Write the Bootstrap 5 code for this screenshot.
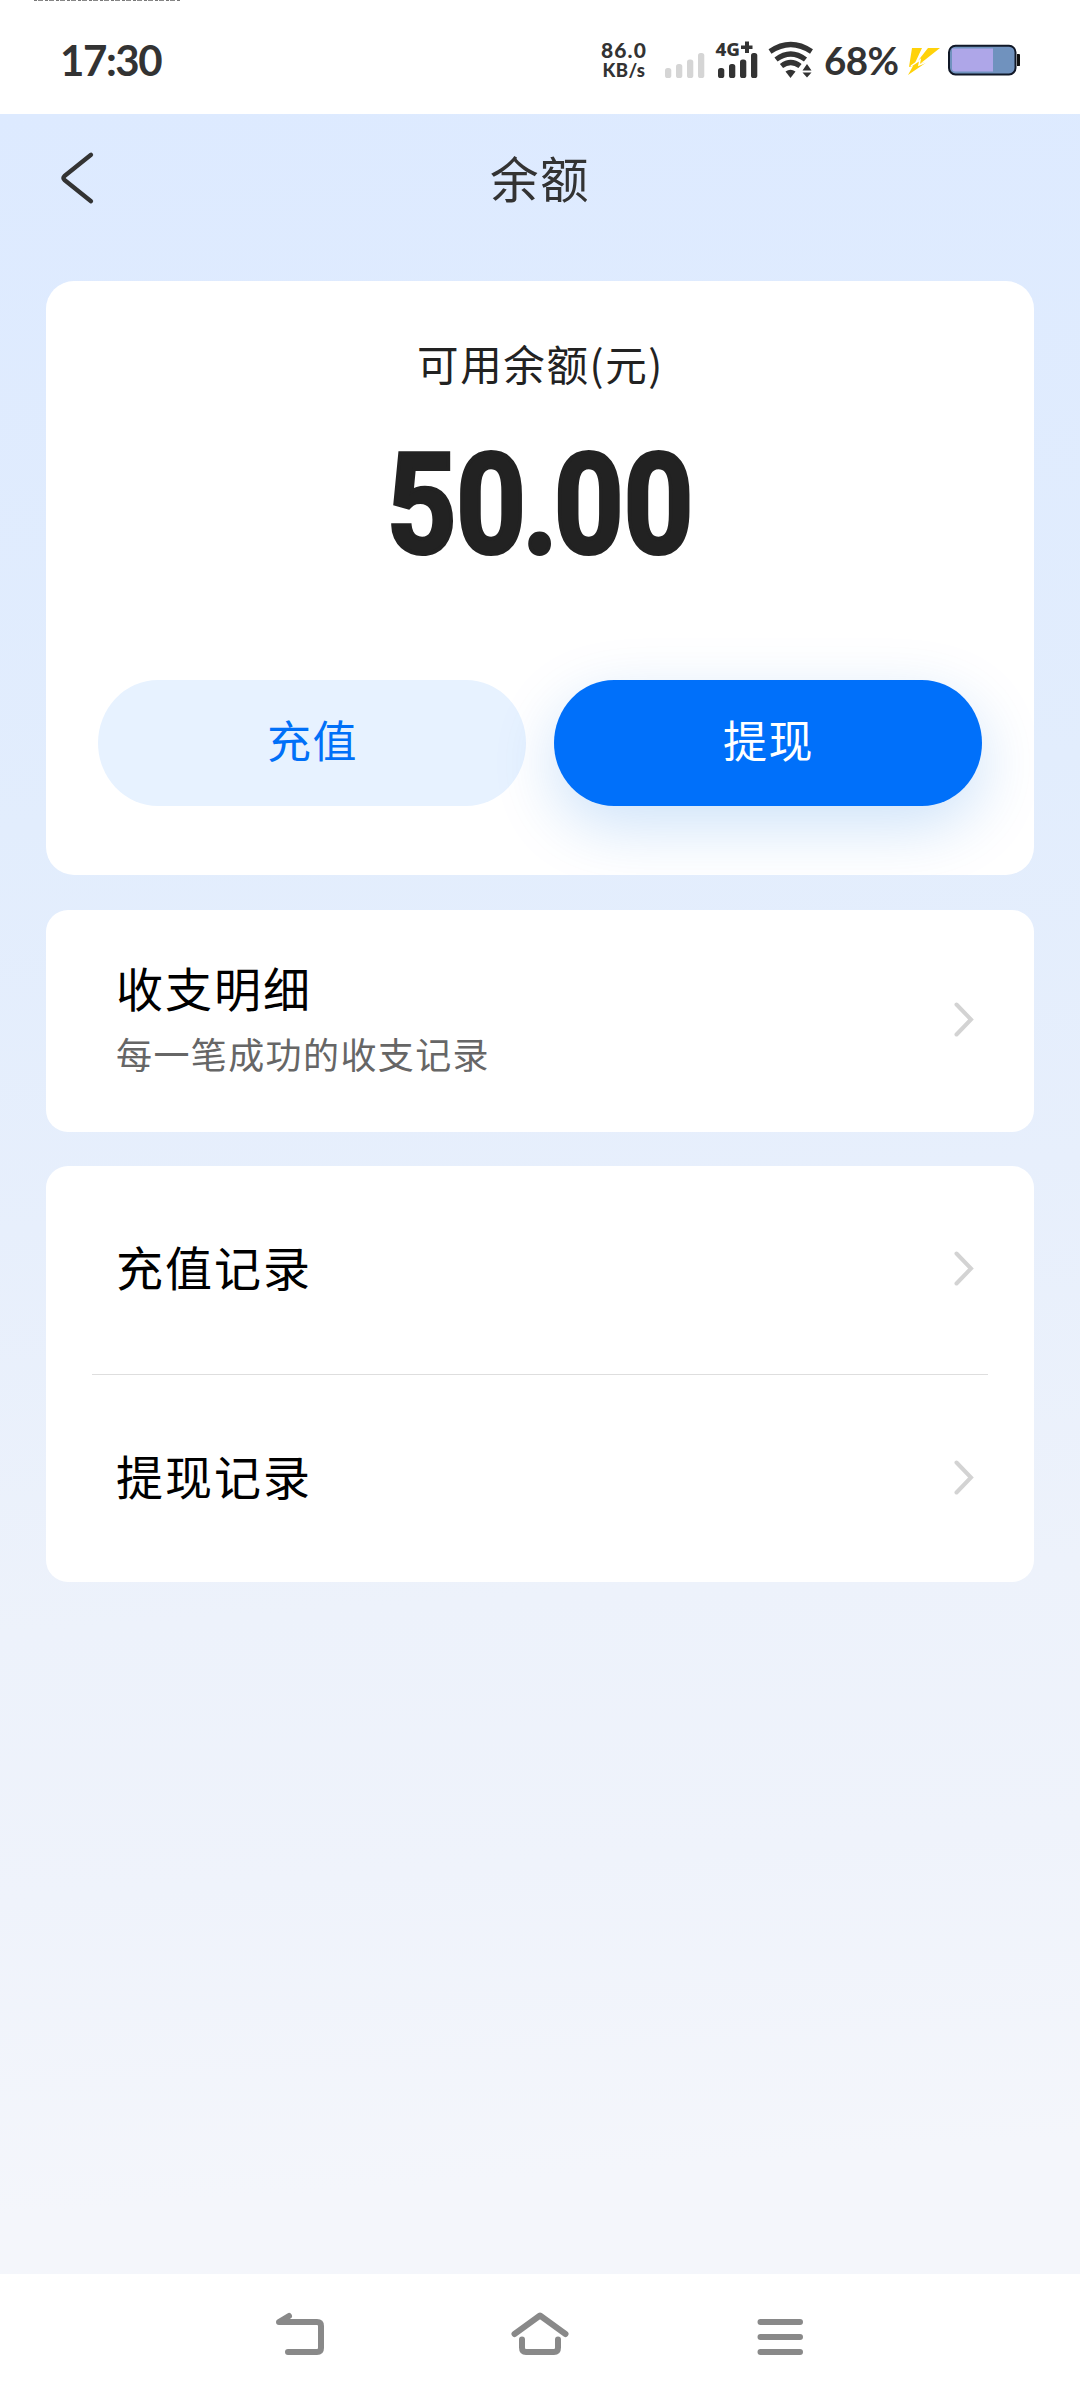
<!DOCTYPE html>
<html lang="zh-CN">
<head>
<meta charset="utf-8">
<meta name="viewport" content="width=device-width, initial-scale=1">
<title>余额</title>
<link href="https://cdn.jsdelivr.net/npm/bootstrap@5.3.0/dist/css/bootstrap.min.css" rel="stylesheet">
<style>
  body { font-family: "Noto Sans CJK SC", sans-serif; width: 1080px; height: 2400px; overflow: hidden; background: #fff; }
  svg { display: block; flex: none; }
  .status { height: 114px; font-family: Lato, sans-serif; color: #333; padding-left: 60px; padding-right: 60px; }
  .ticks { left: 34px; top: 0; width: 146px; height: 1px; background: repeating-linear-gradient(90deg, #777 0 3px, #fff 3px 4px, #888 4px 9px, #fff 9px 11px); }
  .clock { font-size: 42px; font-weight: 700; line-height: 60px; letter-spacing: -1.400px; padding-top: 30px; }
  .status-right { padding-top: 30px; height: 60px; }
  .rate { font: 900 21px/20px Lato, sans-serif; width: 50px; margin-right: 15px; padding-top: 10px; letter-spacing: 1.100px; }
  .rate small { display: block; font-size: 18.500px; line-height: 20px; letter-spacing: .4px; }
  .percent { font-size: 38.500px; font-weight: 700; line-height: 60px; width: 78px; letter-spacing: -.6px; }
  .page-bg { height: 2160px; background: linear-gradient(176deg, #ddeaff 0%, #e2edfd 32%, #e7effc 50%, #edf2fb 68%, #eff3fb 80%, #f4f6fb 94%, #f4f6fb 100%); padding: 0 46px; }
  .topbar { height: 167px; display: grid; grid-template-columns: 60px 1fr 60px; padding-top: 36px; }
  .topbar svg { margin-top: -2px; }
  .topbar h1 { font-size: 48.500px; line-height: 54px; letter-spacing: 1.600px; color: #333; font-weight: 400; }
  .panel { border: 0; border-radius: 22px; background: #fff; }
  .balance { height: 594px; border-radius: 28px; padding: 54px 52px 0; overflow: hidden; margin-bottom: 35px; }
  .caption-line { font-size: 41.500px; line-height: 56px; letter-spacing: 1.600px; color: #222; padding-left: 1px; }
  .amount { font: 700 140px/170px Roboto, sans-serif; color: #222; height: 170px; margin-top: 29px; white-space: nowrap; -webkit-text-stroke: 4px #222; }
  .amount span { display: inline-block; transform: scaleX(.866); }
  .amount i { font-style: normal; margin: 0 -4px; }
  .actions { margin-top: 90px; gap: 28px; }
  .actions .btn { height: 126px; border: 0; border-radius: 60px / 63px; font-size: 44px; line-height: 60px; letter-spacing: 1.400px; padding: 0 0 9px 1px; flex: 1 1 0; }
  .btn-soft { background: #e7f2ff; color: #0070f8; }
  .btn-solid { background: #0070fa; color: #fff; box-shadow: 0 20px 64px rgba(0, 112, 225, .2); }
  .detail { height: 222px; padding: 46px 60px 0 70px; margin-bottom: 34px; }
  .detail svg { margin-top: 46px; }
  .item-title { font-size: 47px; line-height: 62px; letter-spacing: 2px; color: #000; }
  .item-sub { font-size: 36px; line-height: 50px; letter-spacing: 1.400px; color: #666; margin-top: 10px; }
  .records { height: 416px; padding: 0 46px; }
  .record { height: 208px; padding: 0 14px 8px 24px; background: none; border: 0; }
  .record + .record { border-top: 1px solid #dedede; }
  .record svg { margin-top: 5px; }
  .record + .record svg { margin-top: 7px; }
  .sysnav { height: 126px; }
</style>
</head>
<body>
<header class="status d-flex justify-content-between align-items-start position-relative">
  <div class="ticks position-absolute"></div>
  <div class="clock">17:30</div>
  <div class="status-right d-flex">
    <div class="rate text-center">86.0<small>KB/s</small></div>
    <svg width="156" height="60" viewBox="664 30 156 60">
      <g fill="#d5d5d5"><rect x="665" y="68" width="6.300" height="10" rx="2.600"/><rect x="676" y="64" width="6.300" height="14" rx="2.600"/><rect x="687" y="59.500" width="6.300" height="18.500" rx="2.600"/><rect x="698" y="53" width="6.300" height="25" rx="2.600"/></g>
      <g fill="#333"><rect x="718" y="68" width="6.300" height="10" rx="2.600"/><rect x="729" y="64" width="6.300" height="14" rx="2.600"/><rect x="740" y="59.500" width="6.300" height="18.500" rx="2.600"/><rect x="751" y="53" width="6.300" height="25" rx="2.600"/>
        <text x="715.500" y="55.800" font-family="Noto Sans" font-size="18" font-weight="800" textLength="24.500" lengthAdjust="spacingAndGlyphs">4G</text>
        <path d="M741 45.500h4v-4h4v4h3.500v3.600h-3.500v4h-4v-4h-4z"/>
        <path d="M785.500 71.500q5-3.500 10 0l-5 6.500z"/><path d="M802.500 70.500l4.500-6.500 4.500 6.500zM802.500 72.500h9l-4.500 5z"/></g>
      <g fill="none" stroke="#333" stroke-width="5.200" stroke-linecap="butt"><path d="M770 51.500Q790.700 37.500 811.500 51.500"/><path d="M776 59.500Q790.700 48.500 805.500 59.500"/><path d="M781.500 66Q790.700 59 800 66"/></g>
    </svg>
    <div class="percent ms-1">68%</div>
    <svg width="118" height="60" viewBox="902 30 118 60">
      <path fill="#ffd20a" d="M912 48h10l-7 15 2-1 11-14h12L921 63l6-1-19 13 5-9-4 1z"/>
      <path fill="none" stroke="#fff" stroke-width="1.500" d="M911 66l9-6-1 5 10-4"/>
      <rect x="949" y="45.700" width="66.500" height="28.700" rx="6.500" fill="#7092be" stroke="#111827" stroke-width="2"/>
      <path fill="#aea6e8" d="M952 48.500h41v23h-38q-3 0-3-3z"/><path fill="#111" d="M1017 54h2q1.300 0 1.300 2v8q0 2-1.300 2h-2z"/>
    </svg>
  </div>
</header>

<main class="page-bg">
  <div class="topbar">
    <svg width="60" height="60" viewBox="46 148 60 60"><path d="M91 154.800L64.500 176Q62.500 178 64.500 180L91 201.200" fill="none" stroke="#333" stroke-width="4.300" stroke-linecap="round" stroke-linejoin="round"/></svg>
    <h1 class="m-0 text-center">余额</h1>
  </div>

  <section class="panel balance text-center">
    <div class="caption-line">可用余额(元)</div>
    <div class="amount"><span>50<i>.</i>00</span></div>
    <div class="actions d-flex">
      <button class="btn btn-soft" type="button">充值</button>
      <button class="btn btn-solid" type="button">提现</button>
    </div>
  </section>

  <section class="panel detail d-flex justify-content-between align-items-start">
    <div>
      <div class="item-title">收支明细</div>
      <div class="item-sub">每一笔成功的收支记录</div>
    </div>
    <svg width="22" height="36" viewBox="0 0 22 36"><path d="M4.500 2.500L19 17.500 4.500 32.500" fill="none" stroke="#d3d3d3" stroke-width="4" stroke-linecap="round"/></svg>
  </section>

  <section class="panel records">
    <div class="record d-flex justify-content-between align-items-center">
      <span class="item-title">充值记录</span>
      <svg width="22" height="36" viewBox="0 0 22 36"><path d="M4.500 2.500L19 17.500 4.500 32.500" fill="none" stroke="#d3d3d3" stroke-width="4" stroke-linecap="round"/></svg>
    </div>
    <div class="record d-flex justify-content-between align-items-center">
      <span class="item-title">提现记录</span>
      <svg width="22" height="36" viewBox="0 0 22 36"><path d="M4.500 2.500L19 17.500 4.500 32.500" fill="none" stroke="#d3d3d3" stroke-width="4" stroke-linecap="round"/></svg>
    </div>
  </section>
</main>

<nav class="sysnav d-flex justify-content-center align-items-center bg-white">
  <svg width="540" height="60" viewBox="270 2307 540 60" fill="none" stroke="#898989" stroke-width="6" stroke-linecap="round" stroke-linejoin="round">
    <path d="M288 2352h29q4 0 4-4v-22q0-4-4-4h-38l10-6"/>
    <path d="M514.500 2334L540 2315.500 565.500 2334M522 2339.500v8q0 4.500 4 4.500h28q4 0 4-4.500v-8"/>
    <path d="M760.500 2322h39.500M760.500 2337h39.500M760.500 2352h39.500"/>
  </svg>
</nav>
<script src="https://cdn.jsdelivr.net/npm/bootstrap@5.3.0/dist/js/bootstrap.bundle.min.js"></script>
</body>
</html>
